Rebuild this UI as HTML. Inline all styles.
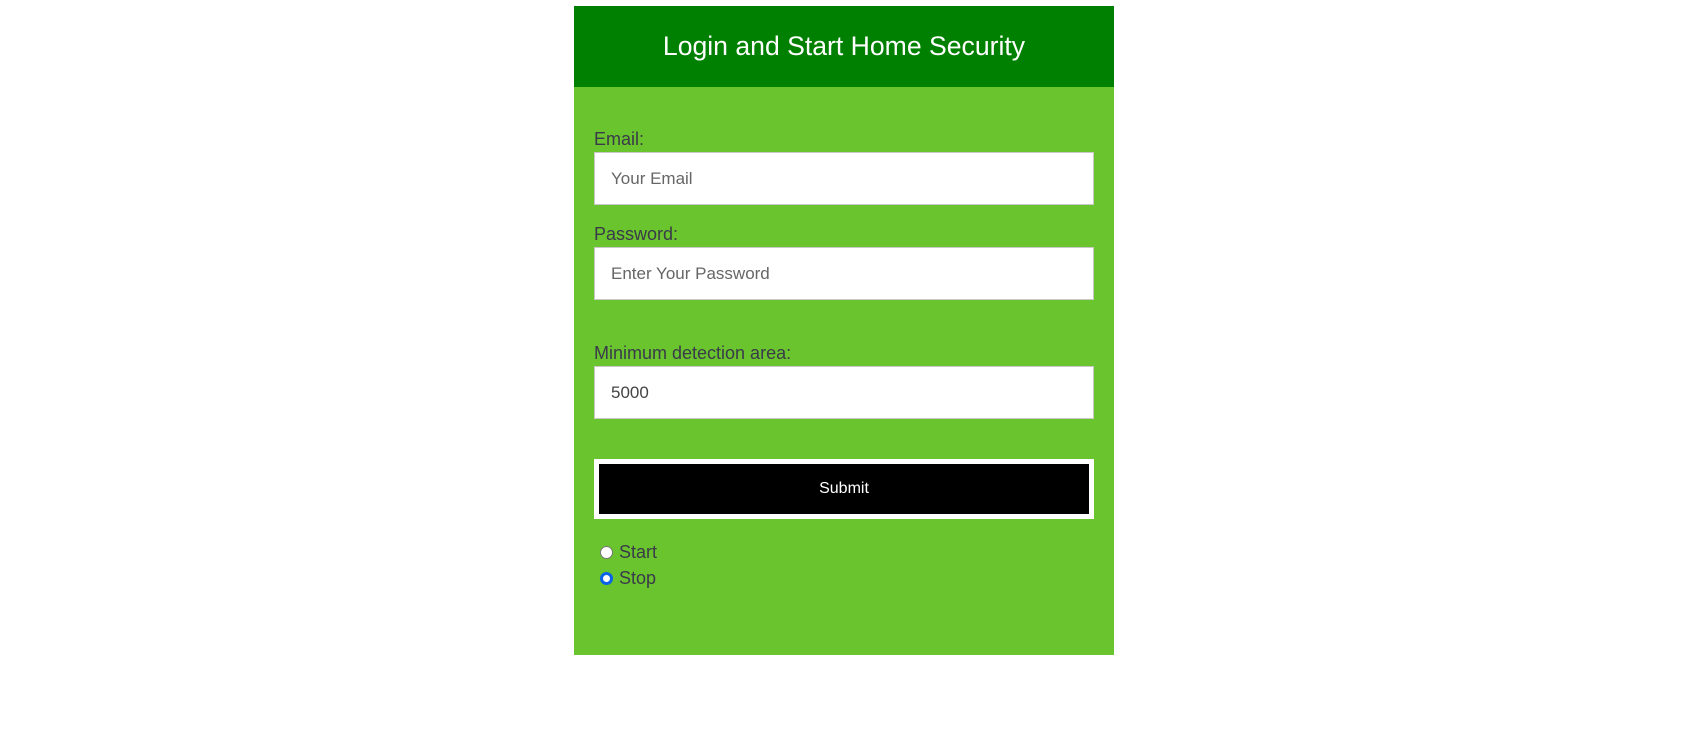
<!DOCTYPE html>
<html><head><meta charset="utf-8"><style>
html,body{margin:0;padding:0;background:#fff;width:1703px;height:729px;overflow:hidden;font-family:"Liberation Sans",Arial,sans-serif}
.panel{position:absolute;left:574px;top:6px;width:540px;height:649px;background:#69c42d}
.head{height:81px;background:#008000;color:#fff;font-size:26.6px;text-align:center;line-height:80px}
.lbl{position:absolute;left:20px;font-size:18px;color:#3a3a4a}
.inp{position:absolute;left:20px;width:500px;height:53px;background:#fff;border:1px solid #c8c8c8;box-sizing:border-box;font-size:17px;color:#666;padding-left:16px;line-height:51px}
.btn{position:absolute;left:20px;top:453px;width:500px;height:60px;background:#fff}
.btn div{position:absolute;left:5px;top:5px;right:5px;bottom:5px;background:#000;color:#fff;font-size:16px;text-align:center;line-height:50px}
.r{position:absolute;left:26px;font-size:18px;color:#3a3a4a}
.rad{display:inline-block;width:13px;height:13px;border-radius:50%;box-sizing:border-box;vertical-align:-1px;margin-right:6px}
</style></head><body>
<div class="panel">
<div class="head">Login and Start Home Security</div>
<div class="lbl" style="top:123px">Email:</div>
<div class="inp" style="top:146px">Your Email</div>
<div class="lbl" style="top:218px">Password:</div>
<div class="inp" style="top:241px">Enter Your Password</div>
<div class="lbl" style="top:337px">Minimum detection area:</div>
<div class="inp" style="top:360px;color:#444">5000</div>
<div class="btn"><div>Submit</div></div>
<div class="r" style="top:536px"><span class="rad" style="border:1px solid #777;background:#fff"></span>Start</div>
<div class="r" style="top:562px"><span class="rad" style="border:3px solid #0b62e8;background:#fff"></span>Stop</div>
</div>
</body></html>
